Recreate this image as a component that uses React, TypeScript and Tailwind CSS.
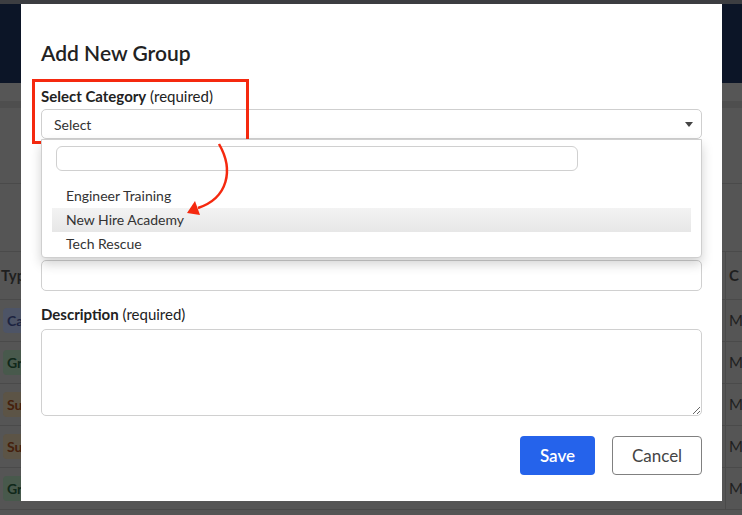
import React from "react";

const rows = [
  { tag: "Ca", cls: "bg-[#4d5466] text-[#1c2340]" },
  { tag: "Gr", cls: "bg-[#48594c] text-[#10281a]" },
  { tag: "Su", cls: "bg-[#5c5446] text-[#45200c]" },
  { tag: "Su", cls: "bg-[#5c5446] text-[#45200c]" },
  { tag: "Gr", cls: "bg-[#48594c] text-[#10281a]" },
];

function Backdrop() {
  return (
    <div className="w-[742px] h-[515px] bg-[#555555] overflow-hidden font-['Lato',sans-serif]">
      <div className="h-[4px] bg-[#3c3d41]" />
      <div className="h-[79px] bg-[#0c1527]" />
      <div className="h-[18px] bg-[#565656]" />
      <div className="h-[7px] bg-[#4e4e4e]" />
      <div className="h-[76px] border-b border-[#4a4a4a]" />
      <div className="h-[68px] border-b border-[#4a4a4a]" />
      <div className="flex h-[48px] border-b border-[#4a4a4a] items-center justify-between text-[15px] font-bold text-[#1f1f1f]">
        <span className="pl-[1px]">Typ</span>
        <span className="pl-[3px] w-[17px] border-l border-[#4a4a4a] h-full flex items-center">C</span>
      </div>
      {rows.map((r, i) => (
        <div key={i} className="flex h-[42px] border-b border-[#4a4a4a] items-center justify-between">
          <span className={`ml-[3px] pl-[4px] w-[18px] py-[2px] rounded-l-[4px] text-[14px] font-bold ${r.cls}`}>{r.tag}</span>
          <span className="pl-[3px] w-[17px] border-l border-[#4a4a4a] h-full flex items-center text-[15px] text-[#1f1f1f]">M</span>
        </div>
      ))}
    </div>
  );
}

export default function App() {
  return (
    <div className="relative w-[742px] h-[515px] overflow-hidden font-['Lato',sans-serif]">
      <Backdrop />

      <div className="absolute left-[21px] top-[4px] w-[701px] h-[497px] bg-white px-[20px]">
        <h2 className="mt-[36px] text-[21px] leading-[26px] font-semibold text-[#222]">Add New Group</h2>

        <div className="relative mt-[19px]">
          <div className="mb-[2px] text-[15px] leading-[22px] text-[#222]">
            <span className="font-bold">Select Category</span> (required)
          </div>
          <div className="h-[30px] rounded-[5px] border border-[#cfcfcf] flex items-center justify-between pl-[12px] pr-[8px] text-[14px] text-[#333]">
            <span>Select</span>
            <svg width="8" height="5" viewBox="0 0 8 5">
              <path d="M0 0 H8 L4 5 Z" fill="#444" />
            </svg>
          </div>

          <div className="absolute left-0 right-0 top-[54px] z-10 h-[119px] bg-white border border-[#cfcfcf] rounded-b-[4px] shadow-[0_6px_12px_rgba(0,0,0,0.18)]">
            <div className="ml-[14px] mt-[6px] w-[522px] h-[25px] rounded-[6px] border border-[#d0d0d0]" />
            <div className="mt-[13px] px-[10px] text-[14px] text-[#333]">
              <div className="h-[24px] leading-[24px] pl-[14px]">Engineer Training</div>
              <div className="h-[24px] leading-[24px] pl-[14px] bg-gradient-to-b from-[#f3f3f3] to-[#e7e7e7]">New Hire Academy</div>
              <div className="h-[24px] leading-[24px] pl-[14px]">Tech Rescue</div>
            </div>
          </div>
        </div>

        <div className="mt-[121px] h-[31px] rounded-[5px] border border-[#d0d0d0]" />

        <div className="mt-[12px]">
          <div className="mb-[4px] text-[15px] leading-[22px] text-[#222]">
            <span className="font-bold">Description</span> (required)
          </div>
          <textarea
            readOnly
            className="block w-full h-[87px] rounded-[5px] border border-[#d0d0d0] outline-none"
          />
        </div>

        <div className="mt-[20px] flex justify-end gap-[17px]">
          <button className="w-[75px] h-[39px] rounded-[4px] bg-[#2563eb] text-white text-[17px] font-semibold">Save</button>
          <button className="w-[90px] h-[39px] rounded-[4px] border border-[#808080] text-[#444] text-[17px]">Cancel</button>
        </div>
      </div>

      <div className="absolute left-[32px] top-[79px] w-[217px] h-[65px] border-[3px] border-[#f5290f]" />
      <svg className="absolute left-0 top-0 z-20" width="742" height="515" viewBox="0 0 742 515">
        <path d="M219 144 C234 170 228 198 198 208" fill="none" stroke="#f5290f" strokeWidth="2.5" />
        <polygon points="187,213 195,201 200,215" fill="#f5290f" />
      </svg>
    </div>
  );
}
